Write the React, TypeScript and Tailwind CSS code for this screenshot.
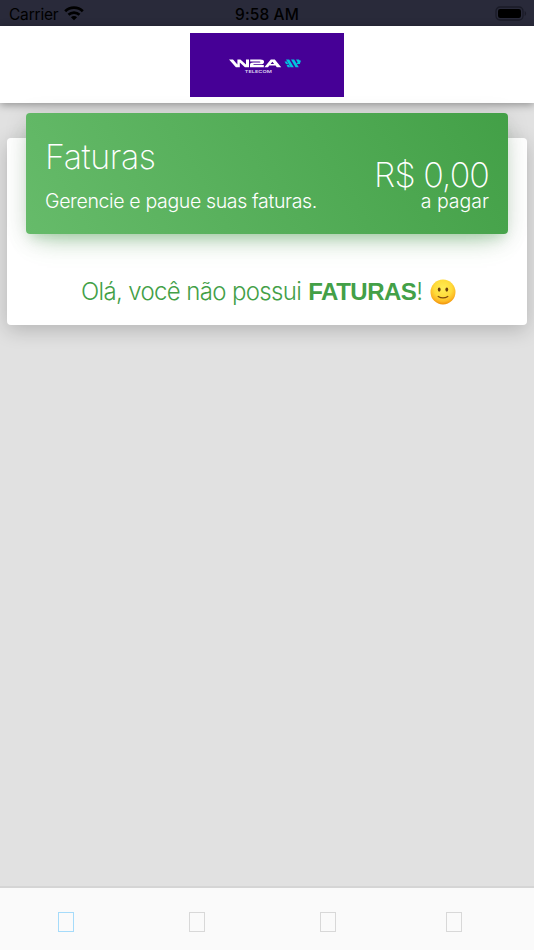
import React from "react";

const StatusBar = () => (
  <div className="grid h-[26px] shrink-0 grid-cols-3 items-center bg-[#292a3a] font-['Inter',sans-serif] text-black">
    <div className="flex items-center gap-[6px] pl-[9px] pt-[3px]">
      <span className="text-[15.5px] leading-none tracking-[-0.2px]">Carrier</span>
      <svg width="20" height="15" viewBox="0 0 20 15" className="-mt-[3px]">
        <path d="M10 14.3 6.9 11.2a4.4 4.4 0 0 1 6.2 0Z" fill="currentColor" />
        <path d="M4.5 8.8a7.8 7.8 0 0 1 11 0" fill="none" stroke="currentColor" strokeWidth="2.7" />
        <path d="M1.2 5.2a12.4 12.4 0 0 1 17.6 0" fill="none" stroke="currentColor" strokeWidth="2.7" />
      </svg>
    </div>
    <span className="pt-[3px] text-center text-[15.5px] font-medium leading-none tracking-[0.1px]">
      9:58 AM
    </span>
    <div className="flex justify-end pr-[7px]">
      <svg width="32" height="15" viewBox="0 0 32 15">
        <rect x="1" y="1" width="27" height="13" rx="4" fill="none" stroke="#1a1b27" strokeWidth="1.3" />
        <rect x="3" y="3" width="23" height="9" rx="2.2" fill="#000" />
        <path d="M29.7 5v5c1.8-.8 1.8-4.2 0-5Z" fill="#1a1b27" />
      </svg>
    </div>
  </div>
);

const Logo = () => (
  <svg width="154" height="64" viewBox="0 0 154 64">
    <rect width="154" height="64" fill="#460096" />
    <g fill="#fff">
      <path d="M39 26.4h4l4.4 5v-5h3l5.6 5v-5h3v7.8h-4.1l-5.1-4.8v4.8h-3.9Z" />
      <path d="M60.2 26.4h10.2q3.6 0 3.6 2.2v.4q0 2.3-3.4 2.3h-6.4q-1 0-1 .8h10.6v2.1H60v-2.5q0-2.2 3.4-2.2h6q1 0 1-.5t-1-.5h-9.2Z" />
      <path d="M80.8 26.4h4l6.4 7.8h-4.4l-1.2-1.6h-6.3l-1.3 1.6h-3.6Zm1.6 2.3-1.8 2.2h3.5Z" />
    </g>
    <text
      x="68.3"
      y="40.2"
      textAnchor="middle"
      textLength="27"
      lengthAdjust="spacingAndGlyphs"
      fill="#ddd0ef"
      className="font-['Inter',sans-serif] text-[3.6px] font-semibold"
    >
      TELECOM
    </text>
    <g fill="#00c4de">
      <path d="M96 26.4h3.2l4.6 7.8h-3.2Z" />
      <path d="M101 26.4h3.2l4.6 7.8h-3.2Z" />
      <path d="M106 26.4h3l1.2 2.2-1 2.4h-.6Z" />
      <path d="M94.6 28.6h2.2l1.4 2.4h-2.2Z" />
      <path d="M96.4 31.8h2.4l1.4 2.4h-2.4Z" />
      <path d="M106.4 31h3.4l1.1-3.4h-1.7Z" />
    </g>
  </svg>
);

const Smile = () => (
  <svg width="26" height="26" viewBox="0 0 26 26" className="shrink-0">
    <defs>
      <radialGradient id="face" cx="50%" cy="36%" r="64%">
        <stop offset="0" stopColor="#ffec55" />
        <stop offset="0.55" stopColor="#ffdc3a" />
        <stop offset="0.82" stopColor="#fdb925" />
        <stop offset="1" stopColor="#ef9008" />
      </radialGradient>
    </defs>
    <circle cx="13" cy="13" r="12.5" fill="url(#face)" />
    <ellipse cx="9.2" cy="10.6" rx="1.4" ry="2.1" fill="#6b3d0c" />
    <ellipse cx="16.8" cy="10.6" rx="1.4" ry="2.1" fill="#6b3d0c" />
    <path d="M8.2 17.4q4.8 3 9.6 0" fill="none" stroke="#80490c" strokeWidth="1.2" strokeLinecap="round" />
  </svg>
);

const tabs = [
  "ml-[58px] border-[#a5dbfa]",
  "ml-[115px] border-[#d8d8d8]",
  "ml-[115px] border-[#d8d8d8]",
  "ml-[110px] border-[#d8d8d8]",
];

const App = () => {
  return (
    <div className="flex h-[950px] w-[534px] flex-col overflow-hidden bg-[#e1e1e1] font-['Inter',sans-serif]">
      <StatusBar />
      <header className="flex h-[77px] shrink-0 justify-center bg-white pt-[7px] shadow-[0_2px_8px_rgba(0,0,0,0.35)]">
        <Logo />
      </header>

      <main className="flex-1 px-[7px] pt-[35px]">
        <section className="flex h-[187px] flex-col rounded-[4px] bg-white px-[19px] shadow-[0_5px_20px_rgba(0,0,0,0.2)]">
          <div className="-mt-[25px] flex h-[121px] shrink-0 justify-between rounded-[4px] bg-[linear-gradient(60deg,#66bb6a,#43a047)] px-[19px] text-white shadow-[0_14px_26px_-12px_rgba(76,175,80,0.42),0_4px_23px_0_rgba(0,0,0,0.12),0_8px_10px_-5px_rgba(76,175,80,0.2)]">
            <div className="flex flex-col pt-[24px]">
              <h1 className="text-[34px] font-[250] leading-[40px] tracking-[-0.45px]">
                Faturas
              </h1>
              <p className="mt-[12px] whitespace-nowrap text-[19.5px] font-light leading-[24px] tracking-[-0.35px]">
                Gerencie e pague suas faturas.
              </p>
            </div>
            <div className="flex flex-col items-end pt-[46px]">
              <span className="whitespace-nowrap text-[34px] font-[250] leading-[31px] tracking-[-0.9px]">
                R$ 0,00
              </span>
              <span className="text-[19.5px] font-light leading-[22px]">a pagar</span>
            </div>
          </div>
          <div className="mt-[42px] flex h-[32px] items-center pl-[55px] text-[#43a047]">
            <p className="w-[340px] whitespace-nowrap text-[24px] font-[270] leading-[32px] tracking-[-0.65px]">
              Olá, você não possui{" "}
              <b className="ml-px font-['Liberation_Sans',sans-serif] font-bold tracking-[-0.5px]">FATURAS</b>!
            </p>
            <div className="ml-[9px]">
              <Smile />
            </div>
          </div>
        </section>
      </main>

      <nav className="flex h-[64px] shrink-0 border-t-2 border-[#d5d5d5] bg-[#fafafa] pt-[24px]">
        {tabs.map((tab, i) => (
          <button key={i} className={`h-5 w-4 border ${tab}`} />
        ))}
      </nav>
    </div>
  );
};

export default App;
